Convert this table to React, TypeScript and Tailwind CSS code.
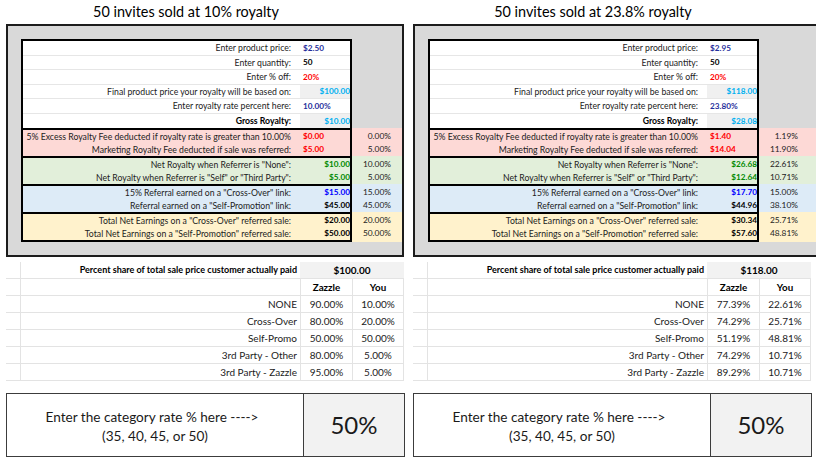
import React from "react";

type Row = {
  label: string;
  value: string;
  vc: string;
  align: "l" | "r";
  bold?: boolean;
  gray?: boolean;
  pct?: string;
};

type PanelData = {
  title: string;
  top: Row[];
  pink: Row[];
  green: Row[];
  blue: Row[];
  yellow: Row[];
  total: string;
  shares: [string, string, string][];
  wide?: boolean;
};

const NAVY = "text-[#1f2f9c]";
const CYAN = "text-[#00b0f0]";
const RED = "text-[#ff0000]";
const GREEN = "text-[#008a00]";
const BLUE = "text-[#0000ff]";
const BLACK = "text-black";

const mk = (
  price: string,
  final: string,
  rate: string,
  gross: string,
  v: string[],
  p: string[]
) => ({
  top: [
    { label: "Enter product price:", value: price, vc: NAVY, align: "l" },
    { label: "Enter quantity:", value: "50", vc: BLACK, align: "l" },
    { label: "Enter % off:", value: "20%", vc: RED, align: "l" },
    { label: "Final product price your royalty will be based on:", value: final, vc: CYAN, align: "r", gray: true },
    { label: "Enter royalty rate percent here:", value: rate, vc: NAVY, align: "l" },
    { label: "Gross Royalty:", value: gross, vc: CYAN, align: "r", gray: true, bold: true },
  ] as Row[],
  pink: [
    { label: "5% Excess Royalty Fee deducted if royalty rate is greater than 10.00%", value: v[0], vc: RED, align: "l", pct: p[0] },
    { label: "Marketing Royalty Fee deducted if sale was referred:", value: v[1], vc: RED, align: "l", pct: p[1] },
  ] as Row[],
  green: [
    { label: 'Net Royalty when Referrer is "None":', value: v[2], vc: GREEN, align: "r", pct: p[2] },
    { label: 'Net Royalty when Referrer is "Self" or "Third Party":', value: v[3], vc: GREEN, align: "r", pct: p[3] },
  ] as Row[],
  blue: [
    { label: '15% Referral earned on a "Cross-Over" link:', value: v[4], vc: BLUE, align: "r", pct: p[4] },
    { label: 'Referral earned on a "Self-Promotion" link:', value: v[5], vc: BLACK, align: "r", pct: p[5] },
  ] as Row[],
  yellow: [
    { label: 'Total Net Earnings on a "Cross-Over" referred sale:', value: v[6], vc: BLACK, align: "r", pct: p[6] },
    { label: 'Total Net Earnings on a "Self-Promotion" referred sale:', value: v[7], vc: BLACK, align: "r", pct: p[7] },
  ] as Row[],
});

const LEFT: PanelData = {
  title: "50 invites sold at 10% royalty",
  ...mk(
    "$2.50",
    "$100.00",
    "10.00%",
    "$10.00",
    ["$0.00", "$5.00", "$10.00", "$5.00", "$15.00", "$45.00", "$20.00", "$50.00"],
    ["0.00%", "5.00%", "10.00%", "5.00%", "15.00%", "45.00%", "20.00%", "50.00%"]
  ),
  total: "$100.00",
  shares: [
    ["NONE", "90.00%", "10.00%"],
    ["Cross-Over", "80.00%", "20.00%"],
    ["Self-Promo", "50.00%", "50.00%"],
    ["3rd Party - Other", "80.00%", "5.00%"],
    ["3rd Party - Zazzle", "95.00%", "5.00%"],
  ],
};

const RIGHT: PanelData = {
  title: "50 invites sold at 23.8% royalty",
  ...mk(
    "$2.95",
    "$118.00",
    "23.80%",
    "$28.08",
    ["$1.40", "$14.04", "$26.68", "$12.64", "$17.70", "$44.96", "$30.34", "$57.60"],
    ["1.19%", "11.90%", "22.61%", "10.71%", "15.00%", "38.10%", "25.71%", "48.81%"]
  ),
  total: "$118.00",
  shares: [
    ["NONE", "77.39%", "22.61%"],
    ["Cross-Over", "74.29%", "25.71%"],
    ["Self-Promo", "51.19%", "48.81%"],
    ["3rd Party - Other", "74.29%", "10.71%"],
    ["3rd Party - Zazzle", "89.29%", "10.71%"],
  ],
  wide: true,
};

function Line({ r, h, divider }: { r: Row; h: string; divider?: boolean }) {
  return (
    <div className={`flex ${h} ${divider ? "border-b border-[#e6e6e6]" : ""}`}>
      <div
        className={`w-[277px] flex items-center justify-end pr-[9px] whitespace-nowrap text-[8.7px] ${
          r.bold ? "font-bold text-black" : "text-[#222222]"
        }`}
      >
        {r.label}
      </div>
      <div
        className={`w-[50px] flex items-center whitespace-nowrap text-[8.2px] font-bold ${r.vc} ${
          r.align === "l" ? "justify-start pl-[3px]" : "justify-end"
        } ${r.gray ? "bg-[#f0f0f0]" : ""}`}
      >
        {r.value}
      </div>
    </div>
  );
}

function Section({
  rows,
  bg,
  innerBg,
  last,
  white,
}: {
  rows: Row[];
  bg: string;
  innerBg: string;
  last?: boolean;
  white?: boolean;
}) {
  const h = white ? "h-[14.5px]" : "h-[13px]";
  return (
    <div className={`flex ${bg}`}>
      <div
        className={`w-[331px] border-x-2 border-t-2 border-black ${last ? "border-b-2" : ""} ${innerBg}`}
      >
        {rows.map((r, i) => (
          <Line key={i} r={r} h={h} divider={white && i < rows.length - 1} />
        ))}
      </div>
      <div className={`w-[48px] pt-[2px] ${last ? "pb-[2px]" : ""}`}>
        {rows.map((r, i) => (
          <div key={i} className={`${h} flex items-center justify-end pr-[9px] text-[8.4px] text-[#222222]`}>
            {r.pct ?? ""}
          </div>
        ))}
      </div>
    </div>
  );
}

function Panel({ d }: { d: PanelData }) {
  return (
    <div className={`flex flex-col shrink-0 ${d.wide ? "w-[405px]" : "w-[398px]"}`}>
      <div className="h-[24px] w-[360px] flex items-center justify-center text-[14.4px] text-black">
        {d.title}
      </div>
      <div className="h-[233px] border-2 border-[#1c1c1c] bg-[#d9d9d9] pt-[13px] pl-[13px]">
        <Section rows={d.top} bg="" innerBg="bg-white" white />
        <Section rows={d.pink} bg="bg-[#fdd9d6]" innerBg="" />
        <Section rows={d.green} bg="bg-[#e2efda]" innerBg="" />
        <Section rows={d.blue} bg="bg-[#ddebf7]" innerBg="" />
        <Section rows={d.yellow} bg="bg-[#fff2cc]" innerBg="" last />
      </div>

      <div className="mt-[5px] w-[398px] flex flex-col">
        <div className="flex h-[17px] border-b border-[#e3e3e3]">
          <div className="w-[15px] border-r border-[#e3e3e3]" />
          <div className="w-[279px] flex items-center justify-end pr-[3px] whitespace-nowrap text-[9px] font-bold text-black">
            Percent share of total sale price customer actually paid
          </div>
          <div className="w-[104px] bg-[#f2f2f2] flex items-center justify-center text-[10px] font-bold text-black">
            {d.total}
          </div>
        </div>
        <div className="flex h-[17px] border-b border-[#e3e3e3]">
          <div className="w-[15px] border-r border-[#e3e3e3]" />
          <div className="w-[279px]" />
          <div className="w-[52px] border-l border-[#e3e3e3] flex items-center justify-center text-[9.8px] font-bold text-black">
            Zazzle
          </div>
          <div className="w-[52px] border-l border-r border-[#e3e3e3] flex items-center justify-center text-[9.8px] font-bold text-black">
            You
          </div>
        </div>
        {d.shares.map(([l, z, y], i) => (
          <div key={i} className="flex h-[17px] border-b border-[#e3e3e3]">
            <div className="w-[15px] border-r border-[#e3e3e3]" />
            <div className="w-[279px] flex items-center justify-end pr-[3px] whitespace-nowrap text-[10px] text-[#222222]">
              {l}
            </div>
            <div className="w-[52px] border-l border-[#e3e3e3] flex items-center justify-center text-[10px] text-[#222222]">
              {z}
            </div>
            <div className="w-[52px] border-l border-r border-[#e3e3e3] flex items-center justify-center text-[10px] text-[#222222]">
              {y}
            </div>
          </div>
        ))}
      </div>

      <div className="mt-[12px] w-[399px] h-[64px] flex border border-[#3c3c3c]">
        <div className="w-[296px] pt-[4px] flex flex-col items-center justify-center text-[13.6px] leading-[19.5px] text-[#1a1a1a]">
          <div className="pr-[6px]">Enter the category rate % here ----&gt;</div>
          <div>(35, 40, 45, or 50)</div>
        </div>
        <div className="flex-1 border-l border-[#3c3c3c] bg-[#f2f2f2] flex items-center justify-center text-[24px] text-[#1a1a1a]">
          50%
        </div>
      </div>
    </div>
  );
}

export default function App() {
  return (
    <div className="w-[816px] h-[463px] overflow-hidden bg-white font-['Lato',sans-serif]">
      <div className="flex gap-[9px] pl-[6px]">
        <Panel d={LEFT} />
        <Panel d={RIGHT} />
      </div>
    </div>
  );
}
